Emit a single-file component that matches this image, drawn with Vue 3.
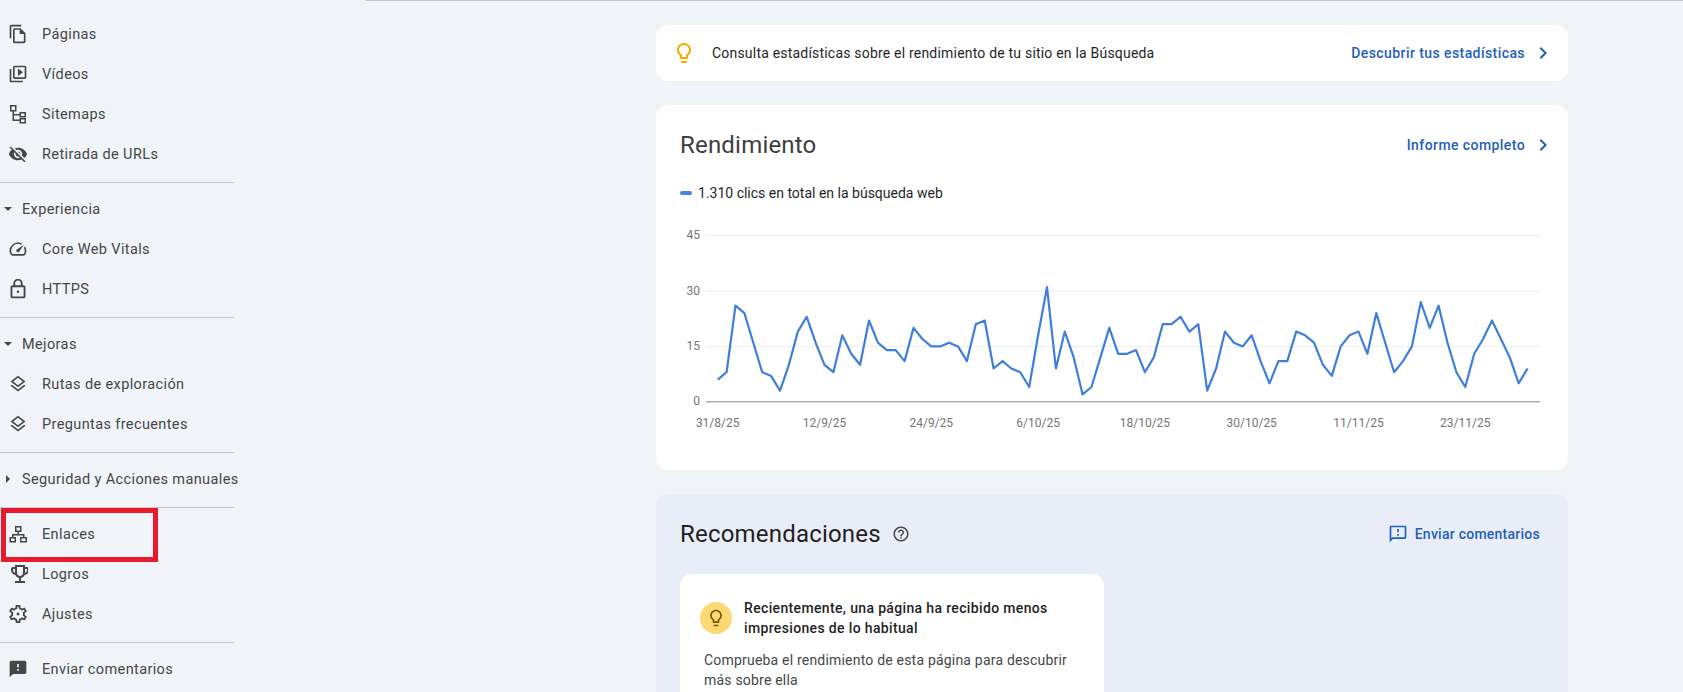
<template>
  <div class="page">
    <aside class="sidebar">
      <template v-for="(group, g) in groups" :key="g">
        <div v-if="g > 0" class="sep"></div>
        <div v-if="group.title" class="head">
          <svg class="caret" viewBox="0 0 12 12"><path :d="group.open ? 'M2 4h8L6 8z' : 'M4 2v8l4-4z'" /></svg>
          <span>{{ group.title }}</span>
        </div>
        <div v-for="item in group.items" :key="item.label" class="row">
          <svg class="icon" :viewBox="item.box || '0 0 24 24'">
            <path :d="item.d" fill-rule="evenodd" />
            <circle v-if="item.dot" cx="12" cy="15" r="1.3" />
            <circle v-if="item.gear" cx="12" cy="12" r="1.6" />
          </svg>
          <span>{{ item.label }}</span>
        </div>
      </template>
      <div class="mark"></div>
    </aside>

    <main class="main">
      <section class="card tip">
        <svg class="bulb" viewBox="0 0 24 24"><path :d="icons.bulb" /></svg>
        <p class="tip-text">Consulta estadísticas sobre el rendimiento de tu sitio en la Búsqueda</p>
        <a class="link wide">Descubrir tus estadísticas</a>
        <svg class="chev" viewBox="0 0 24 24"><path :d="icons.chevron" /></svg>
      </section>

      <section class="card perf">
        <header class="perf-head">
          <h2 class="title">Rendimiento</h2>
          <a class="link wide">Informe completo</a>
          <svg class="chev" viewBox="0 0 24 24"><path :d="icons.chevron" /></svg>
        </header>
        <div class="legend"><i class="dash"></i>1.310 clics en total en la búsqueda web</div>
        <svg class="chart" viewBox="0 0 912 220" width="912" height="220">
          <g v-for="t in yTicks" :key="t">
            <line x1="50" x2="884" :y1="yOf(t)" :y2="yOf(t)" :class="t === 0 ? 'axis' : 'grid'" />
            <text class="tick" x="44" :y="yOf(t) + 0.5" text-anchor="end" dominant-baseline="middle">{{ t }}</text>
          </g>
          <text
            v-for="(d, i) in dates"
            :key="d"
            class="tick"
            :x="xOf(i * 12)"
            y="204"
            text-anchor="middle"
            dominant-baseline="middle"
          >{{ d }}</text>
          <polyline class="line" :points="points" />
        </svg>
      </section>

      <section class="recs">
        <header class="recs-head">
          <h2 class="title dark">Recomendaciones</h2>
          <svg class="help" viewBox="0 0 24 24"><path :d="icons.help" /></svg>
          <svg class="fb" viewBox="0 0 24 24"><path :d="icons.feedbackOutline" /></svg>
          <a class="link">Enviar comentarios</a>
        </header>
        <article class="rec">
          <div class="rec-top">
            <span class="badge">
              <svg viewBox="0 0 24 24"><path :d="icons.bulb" /></svg>
            </span>
            <h3>Recientemente, una página ha recibido menos impresiones de lo habitual</h3>
          </div>
          <p>Comprueba el rendimiento de esta página para descubrir más sobre ella</p>
        </article>
      </section>
    </main>
  </div>
</template>

<script setup>
const icons = {
  bulb: 'M9 21c0 .55.45 1 1 1h4c.55 0 1-.45 1-1v-1H9v1zm3-19C8.14 2 5 5.14 5 9c0 2.38 1.19 4.47 3 5.74V17c0 .55.45 1 1 1h6c.55 0 1-.45 1-1v-2.26c1.81-1.27 3-3.36 3-5.74 0-3.86-3.14-7-7-7zm2.85 11.1l-.85.6V16h-4v-2.3l-.85-.6C7.8 12.16 7 10.63 7 9c0-2.76 2.24-5 5-5s5 2.24 5 5c0 1.63-.8 3.16-2.15 4.1z',
  chevron: 'M10 6L8.59 7.41 13.17 12l-4.58 4.59L10 18l6-6z',
  help: 'M11 18h2v-2h-2v2zm1-16C6.48 2 2 6.48 2 12s4.48 10 10 10 10-4.48 10-10S17.52 2 12 2zm0 18c-4.41 0-8-3.59-8-8s3.59-8 8-8 8 3.59 8 8-3.59 8-8 8zm0-14c-2.21 0-4 1.79-4 4h2c0-1.1.9-2 2-2s2 .9 2 2c0 2-3 1.75-3 5h2c0-2.25 3-2.5 3-5 0-2.21-1.79-4-4-4z',
  feedbackOutline: 'M20 2H4c-1.1 0-2 .9-2 2v18l4-4h14c1.1 0 2-.9 2-2V4c0-1.1-.9-2-2-2zm0 14H5.17L4 17.17V4h16v12zM11 12h2v2h-2zm0-6h2v4h-2z'
}

const layers = 'M11.99 18.54l-7.37-5.73L3 14.07l9 7 9-7-1.63-1.27-7.38 5.74zM12 16l7.36-5.73L21 9l-9-7-9 7 1.63 1.27L12 16zm0-11.47L17.74 9 12 13.47 6.26 9 12 4.53z'

const groups = [
  {
    items: [
      { label: 'Páginas', d: 'M16 1H4c-1.1 0-2 .9-2 2v14h2V3h12V1zm-1 4H8c-1.1 0-1.99.9-1.99 2L6 21c0 1.1.89 2 1.99 2H19c1.1 0 2-.9 2-2V11l-6-6zM8 21V7h6v5h5v9H8z' },
      { label: 'Vídeos', d: 'M4 6H2v14c0 1.1.9 2 2 2h14v-2H4V6zm16-4H8c-1.1 0-2 .9-2 2v12c0 1.1.9 2 2 2h12c1.1 0 2-.9 2-2V4c0-1.1-.9-2-2-2zm0 14H8V4h12v12zM12 5.5v9l6-4.5z' },
      { label: 'Sitemaps', box: '2 2 20 20', d: 'M4 3h6.5v6.5H4zM5.5 4.500V8H9V4.500zM6.500 9.500H8V12h5.500v1.500H8v4h5.500V19H6.500zM13.500 10H20v5.500h-6.500zM15 11.500V14h3.500v-2.500zM13.500 16H20v5.500h-6.500zM15 17.500V20h3.500v-2.500z' },
      { label: 'Retirada de URLs', d: 'M12 7c2.76 0 5 2.24 5 5 0 .65-.13 1.26-.36 1.83l2.92 2.92c1.51-1.26 2.7-2.89 3.43-4.75-1.73-4.39-6-7.5-11-7.5-1.4 0-2.74.25-3.98.7l2.16 2.16C10.74 7.13 11.35 7 12 7zM2 4.270l2.280 2.280.46.46C3.080 8.300 1.780 10.020 1 12c1.730 4.390 6 7.500 11 7.500 1.550 0 3.030-.3 4.380-.84l.42.42L19.730 22 21 20.730 3.270 3 2 4.270zM7.530 9.800l1.550 1.550c-.05.21-.08.43-.08.65 0 1.660 1.340 3 3 3 .22 0 .44-.03.65-.08l1.550 1.550c-.67.33-1.410.53-2.200.53-2.760 0-5-2.240-5-5 0-.79.2-1.530.53-2.200zm4.310-.78l3.150 3.150.02-.16c0-1.660-1.340-3-3-3l-.17.01z' }
    ]
  },
  {
    title: 'Experiencia',
    open: true,
    items: [
      { label: 'Core Web Vitals', d: 'M20.38 8.570l-1.230 1.850a8 8 0 0 1-.22 7.580H5.070A8 8 0 0 1 15.580 6.850l1.850-1.230A10 10 0 0 0 3.350 19a2 2 0 0 0 1.720 1h13.850a2 2 0 0 0 1.740-1 10 10 0 0 0-.27-10.440zm-9.790 6.840a2 2 0 0 0 2.830 0l5.660-8.490-8.490 5.660a2 2 0 0 0 0 2.830z' },
      { label: 'HTTPS', dot: true, box: '1.3 1.3 21.4 21.4', d: 'M18 8h-1V6c0-2.760-2.240-5-5-5S7 3.240 7 6v2H6c-1.100 0-2 .9-2 2v10c0 1.100.9 2 2 2h12c1.100 0 2-.9 2-2V10c0-1.100-.9-2-2-2zM9 6c0-1.660 1.340-3 3-3s3 1.340 3 3v2H9V6zm9 14H6V10h12v10z' }
    ]
  },
  {
    title: 'Mejoras',
    open: true,
    items: [
      { label: 'Rutas de exploración', d: layers },
      { label: 'Preguntas frecuentes', d: layers }
    ]
  },
  { title: 'Seguridad y Acciones manuales', open: false, items: [] },
  {
    items: [
      { label: 'Enlaces', box: '2 2 20 20', d: 'M9 4h6.500v6H9zM10.500 5.500v3H14v-3zM11.500 10H13v2h5.500v3H17v-1.500H7.500V15H6v-3h5.500zM3.500 15h6.500v5.500H3.500zM5 16.500V19h3.500v-2.500zM14 15h7v5.500h-7zM15.500 16.500V19H19.500v-2.500z' },
      { label: 'Logros', box: '0 2 20 20', d: 'M19 5h-2V3H7v2H5c-1.100 0-2 .9-2 2v1c0 2.550 1.920 4.630 4.390 4.940.63 1.500 1.980 2.630 3.610 2.960V19H7v2h10v-2h-4v-3.100c1.630-.33 2.980-1.460 3.610-2.960C19.080 12.630 21 10.550 21 8V7c0-1.100-.9-2-2-2zM5 8V7h2v3.820C5.840 10.400 5 9.300 5 8zm7 6c-1.650 0-3-1.350-3-3V5h6v6c0 1.650-1.350 3-3 3zm7-6c0 1.300-.84 2.400-2 2.820V7h2v1z' },
      { label: 'Ajustes', gear: true, box: '1 1 22 22', d: 'M19.430 12.980c.04-.32.07-.64.07-.98 0-.34-.03-.66-.07-.98l2.110-1.650c.19-.15.24-.42.12-.64l-2-3.460c-.09-.16-.26-.25-.44-.25-.06 0-.12.01-.17.03l-2.490 1c-.52-.4-1.080-.73-1.690-.98l-.38-2.650C14.460 2.180 14.250 2 14 2h-4c-.25 0-.46.18-.49.42l-.38 2.650c-.61.25-1.170.59-1.690.98l-2.490-1c-.06-.02-.12-.03-.18-.03-.17 0-.34.09-.43.25l-2 3.460c-.13.22-.07.49.12.64l2.110 1.650c-.04.32-.07.65-.07.98 0 .33.03.66.07.98l-2.110 1.650c-.19.15-.24.42-.12.64l2 3.460c.09.16.26.25.44.25.06 0 .12-.01.17-.03l2.490-1c.52.4 1.080.73 1.690.98l.38 2.650c.03.24.24.42.49.42h4c.25 0 .46-.18.49-.42l.38-2.650c.61-.25 1.170-.59 1.690-.98l2.490 1c.06.02.12.03.18.03.17 0 .34-.09.43-.25l2-3.460c.12-.22.07-.49-.12-.64l-2.110-1.650zm-1.980-1.710c.04.31.05.52.05.73 0 .21-.02.43-.05.73l-.14 1.130.89.7 1.080.84-.7 1.210-1.270-.51-1.040-.42-.9.68c-.43.32-.84.56-1.250.73l-1.060.43-.16 1.130-.2 1.350h-1.400l-.19-1.350-.16-1.130-1.060-.43c-.43-.18-.83-.41-1.230-.71l-.91-.7-1.060.43-1.270.51-.7-1.210 1.080-.84.89-.7-.14-1.130c-.03-.31-.05-.54-.05-.74s.02-.43.05-.73l.14-1.130-.89-.7-1.080-.84.7-1.210 1.270.51 1.040.42.9-.68c.43-.32.84-.56 1.250-.73l1.060-.43.16-1.130.2-1.350h1.390l.19 1.350.16 1.130 1.060.43c.43.18.83.41 1.230.71l.91.7 1.060-.43 1.270-.51.7 1.210-1.070.85-.89.7.14 1.130z' }
    ]
  },
  {
    items: [
      { label: 'Enviar comentarios', d: 'M20 2H4c-1.100 0-1.990.9-1.990 2L2 22l4-4h14c1.100 0 2-.9 2-2V4c0-1.100-.9-2-2-2zm-7 12h-2v-2h2v2zm0-4h-2V6h2v4z' }
    ]
  }
]

const yTicks = [45, 30, 15, 0]
const dates = ['31/8/25', '12/9/25', '24/9/25', '6/10/25', '18/10/25', '30/10/25', '11/11/25', '23/11/25']

// clics por dia
const clicks = [
  6, 8, 26, 24, 16, 8, 7, 3, 10, 19, 23, 16, 10, 8, 18, 13, 10, 22, 16, 14, 14, 11, 20,
  17, 15, 15, 16, 15, 11, 21, 22, 9, 11, 9, 8, 4, 18, 31, 9, 19, 12, 2, 4, 12, 20, 13,
  13, 14, 8, 12, 21, 21, 23, 19, 21, 3, 9, 19, 16, 15, 18, 11, 5, 11, 11, 19, 18, 16,
  10, 7, 15, 18, 19, 13, 24, 16, 8, 11, 15, 27, 20, 26, 16, 8, 4, 13, 17, 22, 17, 12, 5, 9
]

const xOf = (i) => 61.7 + i * 8.9
const yOf = (v) => 181.8 - v * 3.696
const points = clicks.map((v, i) => `${xOf(i).toFixed(1)},${yOf(v).toFixed(1)}`).join(' ')
</script>

<style>
body {
  margin: 0;
  background: #f0f4f9;
}
</style>

<style scoped>
.page {
  display: flex;
  height: 692px;
  overflow: hidden;
  background: #f0f4f9;
  font-family: Roboto, "Noto Sans", sans-serif;
  font-size: 14px;
  color: #444746;
}

.sidebar {
  position: relative;
  flex: none;
  width: 234px;
  padding-top: 14px;
  font-size: 14.5px;
  letter-spacing: 0.38px;
  white-space: nowrap;
}

.row {
  display: flex;
  align-items: center;
  height: 40px;
  padding-left: 8px;
  gap: 14px;
}

.icon {
  flex: none;
  width: 20px;
  height: 20px;
  fill: #444746;
}

.head {
  display: flex;
  align-items: center;
  height: 40px;
  padding-left: 2px;
  gap: 8px;
}

.caret {
  flex: none;
  width: 12px;
  height: 12px;
  fill: #444746;
}

.sep {
  height: 1px;
  margin: 8px 0 6px;
  background: #c4c7c9;
}

.mark {
  position: absolute;
  left: 1px;
  top: 508px;
  width: 147px;
  height: 44px;
  border: 5px solid #e8192c;
}

.main {
  flex: 1;
  margin-left: 131px;
  padding: 24px 115px 0 291px;
  border-top: 1px solid #c4c7d0;
}

.card {
  background: #fff;
  border-radius: 12px;
}

.tip {
  display: flex;
  align-items: center;
  height: 56px;
  padding: 0 13px 0 16px;
}

.bulb {
  flex: none;
  width: 24px;
  height: 24px;
  fill: #f9ab00;
}

.tip-text {
  flex: 1;
  margin: 0 0 0 16px;
  color: #1f1f1f;
  letter-spacing: 0.2px;
}

.link {
  color: #1f60b8;
  font-weight: 500;
  letter-spacing: 0.25px;
}

.link.wide {
  letter-spacing: 0.42px;
}

.chev {
  flex: none;
  width: 24px;
  height: 24px;
  margin-left: 6px;
  fill: #1f60b8;
}

.perf {
  height: 365px;
  margin-top: 24px;
}

.perf-head {
  display: flex;
  align-items: center;
  justify-content: flex-end;
  padding: 24px 13px 0 24px;
}

.title {
  margin: 0;
  font-size: 24px;
  line-height: 32px;
  font-weight: 400;
  letter-spacing: 0.2px;
  color: #3c3f41;
}

.perf-head .title {
  margin-right: auto;
}

.title.dark {
  color: #1f1f1f;
}

.legend {
  display: flex;
  align-items: center;
  height: 20px;
  margin-top: 22px;
  padding-left: 24px;
  color: #1f1f1f;
}

.dash {
  width: 12px;
  height: 4px;
  margin-right: 6px;
  border-radius: 2px;
  background: #4285e4;
}

.chart {
  display: block;
  margin-top: 17px;
}

.grid {
  stroke: #ececec;
  stroke-width: 1;
}

.axis {
  stroke: #858585;
  stroke-width: 1;
}

.tick {
  fill: #757575;
  font-size: 12px;
}

.line {
  fill: none;
  stroke: #3f7fdb;
  stroke-width: 2.2;
  stroke-linejoin: round;
}

.recs {
  height: 300px;
  margin-top: 24px;
  padding: 24px 28px 0 24px;
  border-radius: 12px 12px 0 0;
  background: #e9edf8;
}

.recs-head {
  display: flex;
  align-items: center;
}

.help {
  width: 18px;
  height: 18px;
  margin-left: 11px;
  margin-right: auto;
  fill: #444746;
}

.fb {
  width: 20px;
  height: 20px;
  margin-right: 7px;
  fill: #1f60b8;
}

.rec {
  width: 376px;
  height: 200px;
  margin-top: 24px;
  padding: 24px;
  border-radius: 12px;
  background: #fff;
}

.rec-top {
  display: flex;
  gap: 12px;
  margin-left: -4px;
}

.badge {
  flex: none;
  display: flex;
  align-items: center;
  justify-content: center;
  width: 32px;
  height: 32px;
  margin-top: 4px;
  border-radius: 50%;
  background: #fcd972;
}

.badge svg {
  width: 20px;
  height: 20px;
  fill: #7a5200;
}

.rec h3 {
  margin: 0;
  font-size: 14px;
  line-height: 20px;
  font-weight: 500;
  color: #1f1f1f;
  letter-spacing: 0.35px;
}

.rec p {
  margin: 12px 0 0;
  line-height: 20px;
  color: #444746;
  letter-spacing: 0.2px;
}
</style>
